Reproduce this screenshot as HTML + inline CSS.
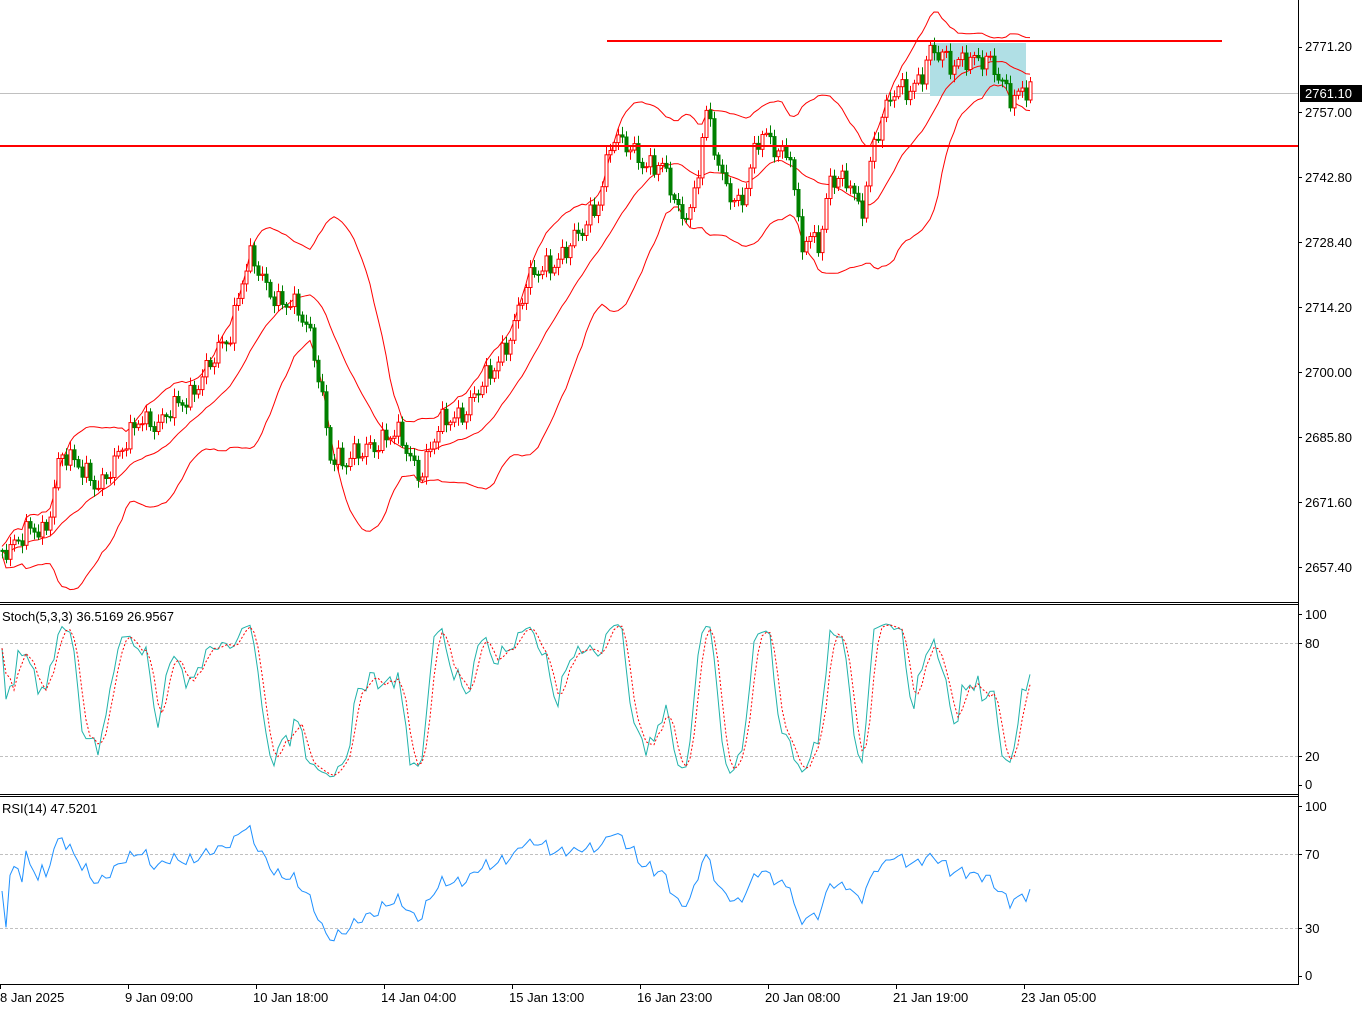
<!DOCTYPE html>
<html><head><meta charset="utf-8"><style>
html,body{margin:0;padding:0;background:#fff;}
body{width:1366px;height:1014px;position:relative;overflow:hidden;font-family:"Liberation Sans",sans-serif;}
svg{position:absolute;left:0;top:0;}
.t{position:absolute;font-size:13px;color:#000;white-space:nowrap;}
.ax{position:absolute;left:1305px;font-size:13px;}
</style></head><body>
<svg id="s" width="1366" height="1014" xmlns="http://www.w3.org/2000/svg"></svg>
<div class="t" style="left:2px;top:609px">Stoch(5,3,3) 36.5169 26.9567</div>
<div class="t" style="left:2px;top:801px">RSI(14) 47.5201</div>
<div class="ax" style="top:39px">2771.20</div>
<div class="ax" style="top:105px">2757.00</div>
<div class="ax" style="top:170px">2742.80</div>
<div class="ax" style="top:235px">2728.40</div>
<div class="ax" style="top:300px">2714.20</div>
<div class="ax" style="top:365px">2700.00</div>
<div class="ax" style="top:430px">2685.80</div>
<div class="ax" style="top:495px">2671.60</div>
<div class="ax" style="top:560px">2657.40</div>
<div style="position:absolute;left:1300px;top:85px;width:62px;height:17px;background:#000;color:#fff;font-size:13px;line-height:17px;padding-left:5px;box-sizing:border-box">2761.10</div>
<div class="ax" style="top:607px">100</div>
<div class="ax" style="top:636px">80</div>
<div class="ax" style="top:749px">20</div>
<div class="ax" style="top:777px">0</div>
<div class="ax" style="top:799px">100</div>
<div class="ax" style="top:847px">70</div>
<div class="ax" style="top:921px">30</div>
<div class="ax" style="top:968px">0</div>
<div class="t" style="left:0px;top:990px">8 Jan 2025</div>
<div class="t" style="left:125px;top:990px">9 Jan 09:00</div>
<div class="t" style="left:253px;top:990px">10 Jan 18:00</div>
<div class="t" style="left:381px;top:990px">14 Jan 04:00</div>
<div class="t" style="left:509px;top:990px">15 Jan 13:00</div>
<div class="t" style="left:637px;top:990px">16 Jan 23:00</div>
<div class="t" style="left:765px;top:990px">20 Jan 08:00</div>
<div class="t" style="left:893px;top:990px">21 Jan 19:00</div>
<div class="t" style="left:1021px;top:990px">23 Jan 05:00</div>
<script>
(function(){
var s=document.getElementById('s'),h='';
var K=[[0,545],[20,540],[45,530],[60,450],[75,470],[100,480],[120,460],[140,410],[160,430],[180,400],[210,370],[230,330],[240,280],[250,260],[265,290],[290,300],[310,340],[320,380],[330,450],[345,470],[370,440],[400,440],[420,470],[440,430],[460,410],[490,380],[510,330],[525,290],[550,260],[580,240],[600,190],[610,140],[625,150],[660,165],[680,220],[695,190],[705,110],[720,180],[740,200],[760,140],[790,150],[800,250],[820,240],[830,170],[850,190],[860,220],[875,130],[890,100],[910,90],[930,50],[950,70],[965,50],[990,70],[1010,90],[1030,92]];
function interp(x){for(var i=1;i<K.length;i++){if(x<=K[i][0]){var a=K[i-1],b=K[i];return a[1]+(b[1]-a[1])*(x-a[0])/(b[0]-a[0]);}}return K[K.length-1][1];}
var N=258,C=[],O=[],H=[],L=[],X=[];
for(var i=0;i<N;i++){var x=2+i*4;X.push(x);var c=interp(x)+8*Math.sin(i*1.7)+7*Math.sin(i*0.55+1)+4*Math.sin(i*2.9);C.push(c);}
for(i=0;i<N;i++){O.push(i?C[i-1]:C[0]);H.push(Math.min(O[i],C[i])-2-6*Math.abs(Math.sin(i*2.3)));L.push(Math.max(O[i],C[i])+2+6*Math.abs(Math.cos(i*1.9)));}
h+='<line x1="0" y1="93.5" x2="1298" y2="93.5" stroke="#c0c0c0"/>';
[643.5,756.5,854.5,928.5].forEach(function(y){h+='<line x1="0" y1="'+y+'" x2="1298" y2="'+y+'" stroke="#c0c0c0" stroke-dasharray="3,2"/>';});
h+='<rect x="930" y="43" width="96" height="53" fill="#b0dfe5"/>';
var up=[],md=[],lo=[];
for(i=0;i<N;i++){var st=Math.max(0,i-19),sum=0,n=i-st+1;for(var j=st;j<=i;j++)sum+=C[j];var m=sum/n,v=0;for(j=st;j<=i;j++)v+=(C[j]-m)*(C[j]-m);var sd=Math.sqrt(v/n);md.push(X[i]+','+m.toFixed(1));up.push(X[i]+','+(m-2*sd-4).toFixed(1));lo.push(X[i]+','+(m+2*sd+4).toFixed(1));}
[up,md,lo].forEach(function(p){h+='<polyline points="'+p.join(' ')+'" fill="none" stroke="#f00" stroke-width="1"/>';});
for(i=0;i<N;i++){var x=X[i],bull=C[i]<O[i],t=Math.min(O[i],C[i]),b=Math.max(O[i],C[i]);if(b-t<1)b=t+1;
var col=bull?'#f00':'#008000';
h+='<line x1="'+(x+.5)+'" y1="'+H[i].toFixed(1)+'" x2="'+(x+.5)+'" y2="'+L[i].toFixed(1)+'" stroke="'+col+'"/>';
h+='<rect x="'+(x-1)+'" y="'+t.toFixed(1)+'" width="3" height="'+(b-t).toFixed(1)+'" fill="'+(bull?'#fff':'#008000')+'" stroke="'+col+'" stroke-width="1"/>';}
h+='<line x1="607" y1="41" x2="1222" y2="41" stroke="#f00" stroke-width="2"/>';
h+='<line x1="0" y1="146" x2="1298" y2="146" stroke="#f00" stroke-width="2"/>';
var kr=[],k=[],d=[];
for(i=0;i<N;i++){var st=Math.max(0,i-4),hh=1e9,ll=-1e9;for(j=st;j<=i;j++){hh=Math.min(hh,H[j]);ll=Math.max(ll,L[j]);}kr.push(ll-hh>0?(ll-C[i])/(ll-hh)*100:50);}
function sma(a,p){var r=[];for(var i=0;i<a.length;i++){var st=Math.max(0,i-p+1),s=0;for(var j=st;j<=i;j++)s+=a[j];r.push(s/(i-st+1));}return r;}
k=sma(kr,3);d=sma(k,3);
function py(v,t,bt){return (bt-(bt-t)*v/100).toFixed(1);}
h+='<polyline points="'+k.map(function(v,i){return X[i]+','+py(v,614,785)}).join(' ')+'" fill="none" stroke="#20b2aa"/>';
h+='<polyline points="'+d.map(function(v,i){return X[i]+','+py(v,614,785)}).join(' ')+'" fill="none" stroke="#f00" stroke-dasharray="2,2"/>';
var g=0,l=0,rs=[];
for(i=0;i<N;i++){var ch=i?(C[i-1]-C[i]):0;var up2=Math.max(ch,0),dn=Math.max(-ch,0);if(i==0){g=0.5;l=0.5;}g=(g*13+up2)/14;l=(l*13+dn)/14;rs.push(100-100/(1+g/l));}
h+='<polyline points="'+rs.map(function(v,i){return X[i]+','+py(v,806,976)}).join(' ')+'" fill="none" stroke="#1e90ff"/>';
h+='<line x1="1298.5" y1="0" x2="1298.5" y2="985" stroke="#000"/>';
h+='<line x1="0" y1="602.5" x2="1298" y2="602.5" stroke="#000"/><line x1="0" y1="604.5" x2="1298" y2="604.5" stroke="#000"/>';
h+='<line x1="0" y1="794.5" x2="1298" y2="794.5" stroke="#000"/><line x1="0" y1="796.5" x2="1298" y2="796.5" stroke="#000"/>';
h+='<line x1="0" y1="984.5" x2="1299" y2="984.5" stroke="#000"/>';
[47,112,177,242,307,372,437,502,567,614,643,756,785,806,854,928,976].forEach(function(y){h+='<line x1="1298" y1="'+(y+.5)+'" x2="1302" y2="'+(y+.5)+'" stroke="#000"/>';});
[0,128,256,384,512,640,768,896,1024].forEach(function(x){h+='<line x1="'+(x+.5)+'" y1="985" x2="'+(x+.5)+'" y2="989" stroke="#000"/>';});
s.innerHTML=h;
})();
</script>
</body></html>
